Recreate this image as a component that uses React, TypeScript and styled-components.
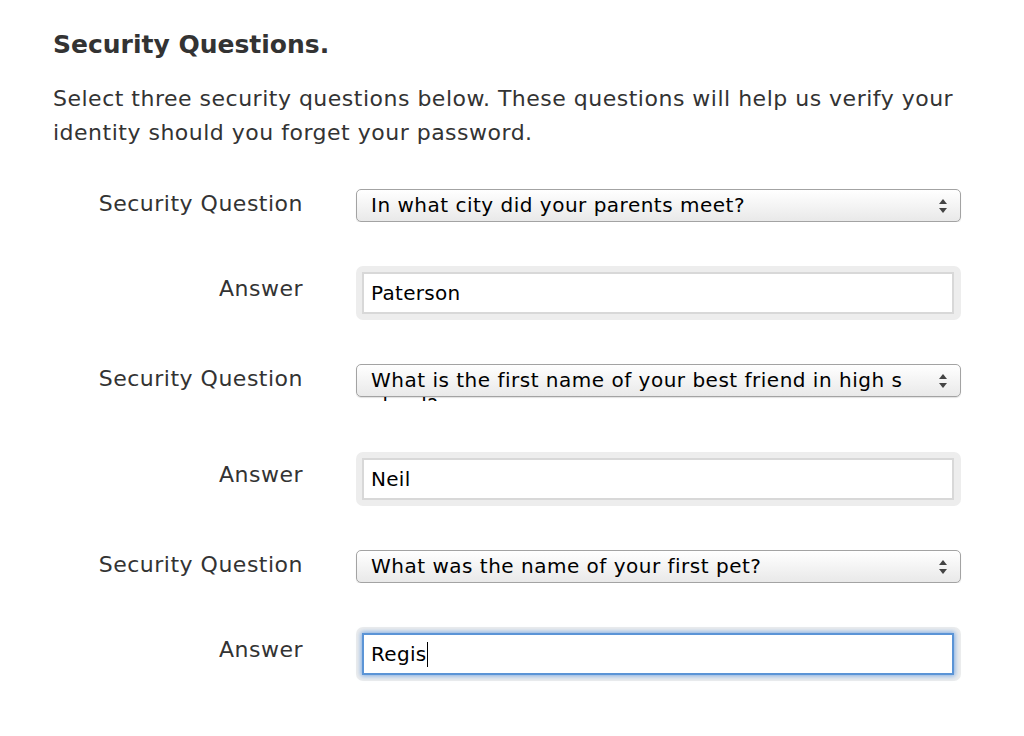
import React from "react";
import styled, { createGlobalStyle } from "styled-components";

const GlobalStyle = createGlobalStyle`
  html, body {
    margin: 0;
    padding: 0;
    background: #ffffff;
  }
  body {
    font-family: "DejaVu Sans", "Liberation Sans", sans-serif;
    color: #333333;
  }
`;

const Page = styled.div`
  width: 1024px;
  min-height: 736px;
  box-sizing: border-box;
  padding: 30px 53px 0 53px;
`;

const Heading = styled.h2`
  margin: 0;
  font-size: 25px;
  line-height: 30px;
  font-weight: bold;
  color: #333333;
`;

const Intro = styled.p`
  margin: 22px 0 0 0;
  font-size: 22px;
  letter-spacing: 0.5px;
  line-height: 34px;
  color: #333333;
`;

const Form = styled.div`
  margin-top: 39px;
  display: flex;
  flex-direction: column;
  gap: 44px;
`;

const Row = styled.div<{ $extra?: number }>`
  display: grid;
  grid-template-columns: 250px 605px;
  column-gap: 53px;
  align-items: start;
  padding-bottom: ${(p) => p.$extra || 0}px;
`;

const Label = styled.div<{ $top: number }>`
  text-align: right;
  font-size: 22px;
  letter-spacing: 0.5px;
  line-height: 30px;
  padding-top: ${(p) => p.$top}px;
  color: #333333;
`;

const SelectClip = styled.div<{ $clip: number }>`
  height: ${(p) => p.$clip}px;
  overflow: hidden;
  padding: 0 2px;
  margin: 0 -2px;
`;

const SelectBox = styled.div`
  position: relative;
  box-sizing: border-box;
  height: 33px;
  border: 1px solid #a3a3a3;
  border-radius: 5px;
  background: linear-gradient(#ffffff, #f4f4f4 50%, #e9e9e9);
  box-shadow: 0 1px 1px rgba(0, 0, 0, 0.12);
  padding: 3px 50px 0 14px;
`;

const SelectText = styled.div<{ $wrap?: boolean }>`
  font-size: 20px;
  letter-spacing: 0.5px;
  line-height: 25px;
  color: #000000;
  word-break: ${(p) => (p.$wrap ? "break-all" : "normal")};
`;

const Arrows = styled.svg`
  position: absolute;
  right: 13px;
  top: 9px;
`;

const FieldWell = styled.div`
  background: #ededed;
  border-radius: 7px;
  padding: 6px 7px 6px 6px;
`;

const Field = styled.div<{ $focused?: boolean }>`
  box-sizing: border-box;
  height: 42px;
  background: #ffffff;
  border: 2px solid ${(p) => (p.$focused ? "#5b94d6" : "#d8d8d8")};
  box-shadow: ${(p) => (p.$focused ? "0 0 5px 1px #7eabe2" : "none")};
  padding: 0 0 0 7px;
  display: flex;
  align-items: center;
  font-size: 20px;
  letter-spacing: 0.3px;
  color: #000000;
`;

const Caret = styled.span`
  display: inline-block;
  width: 1px;
  height: 25px;
  background: #000000;
  margin-left: 1px;
`;

const SelectArrows = () => (
  <Arrows width="8" height="14" viewBox="0 0 8 14">
    <path d="M4 0 L8 5 L0 5 Z" fill="#444" />
    <path d="M0 9 L8 9 L4 14 Z" fill="#444" />
  </Arrows>
);

const questions = [
  { q: "In what city did your parents meet?", a: "Paterson", wrap: false },
  { q: "What is the first name of your best friend in high school?", a: "Neil", wrap: true },
  { q: "What was the name of your first pet?", a: "Regis", wrap: false, focused: true },
];

export default function App() {
  return (
    <>
      <GlobalStyle />
      <Page>
        <Heading>Security Questions.</Heading>
        <Intro>
          Select three security questions below. These questions will help us verify your
          identity should you forget your password.
        </Intro>
        <Form>
          {questions.map((item, i) => (
            <React.Fragment key={i}>
              <Row $extra={item.wrap ? 7 : 0}>
                <Label $top={0}>Security Question</Label>
                <SelectClip $clip={item.wrap ? 37 : 33}>
                  <SelectBox>
                    <SelectText $wrap={item.wrap}>{item.q}</SelectText>
                    <SelectArrows />
                  </SelectBox>
                </SelectClip>
              </Row>
              <Row>
                <Label $top={8}>Answer</Label>
                <FieldWell>
                  <Field $focused={item.focused}>
                    {item.a}
                    {item.focused && <Caret />}
                  </Field>
                </FieldWell>
              </Row>
            </React.Fragment>
          ))}
        </Form>
      </Page>
    </>
  );
}
